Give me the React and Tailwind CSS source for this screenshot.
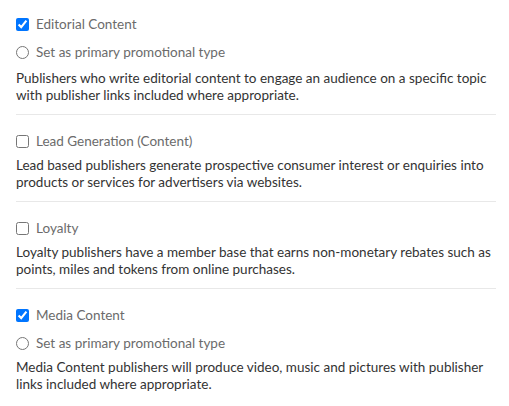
import React from 'react';

const sections = [
    {
        label: 'Editorial Content',
        checked: true,
        primary: true,
        text: 'Publishers who write editorial content to engage an audience on a specific topic with publisher links included where appropriate.',
    },
    {
        label: 'Lead Generation (Content)',
        checked: false,
        primary: false,
        text: 'Lead based publishers generate prospective consumer interest or enquiries into products or services for advertisers via websites.',
    },
    {
        label: 'Loyalty',
        checked: false,
        primary: false,
        text: 'Loyalty publishers have a member base that earns non-monetary rebates such as points, miles and tokens from online purchases.',
    },
    {
        label: 'Media Content',
        checked: true,
        primary: true,
        text: 'Media Content publishers will produce video, music and pictures with publisher links included where appropriate.',
    },
];

const PromoType = ({ item, first, last }) => (
    <div className={`${first ? 'pt-[12px]' : 'pt-[14px]'} pb-[10px] ${last ? '' : 'border-b border-[#e8e8e8]'}`}>
        <label className="flex h-6 items-center gap-[7px] text-[#6b6b6b]">
            <input type="checkbox" defaultChecked={item.checked} className="m-0 h-[13px] w-[13px] accent-[#0075ff]" />
            <span>{item.label}</span>
        </label>
        {item.primary && (
            <label className="mt-[4px] flex h-6 items-center gap-[7px] text-[#6b6b6b]">
                <input type="radio" name={item.label} className="m-0 h-[13px] w-[13px]" />
                <span>Set as primary promotional type</span>
            </label>
        )}
        <p className={`${first ? 'mt-[6px]' : 'mt-[4px]'} leading-[17px] text-[#333]`}>{item.text}</p>
    </div>
);

export default function App() {
    return (
        <div className="w-[509px] bg-white pl-4 pr-[13px] text-[13.5px]" style={{ fontFamily: 'Lato, "Open Sans", sans-serif' }}>
            {sections.map((s, i) => (
                <PromoType key={s.label} item={s} first={i === 0} last={i === sections.length - 1} />
            ))}
        </div>
    );
}
